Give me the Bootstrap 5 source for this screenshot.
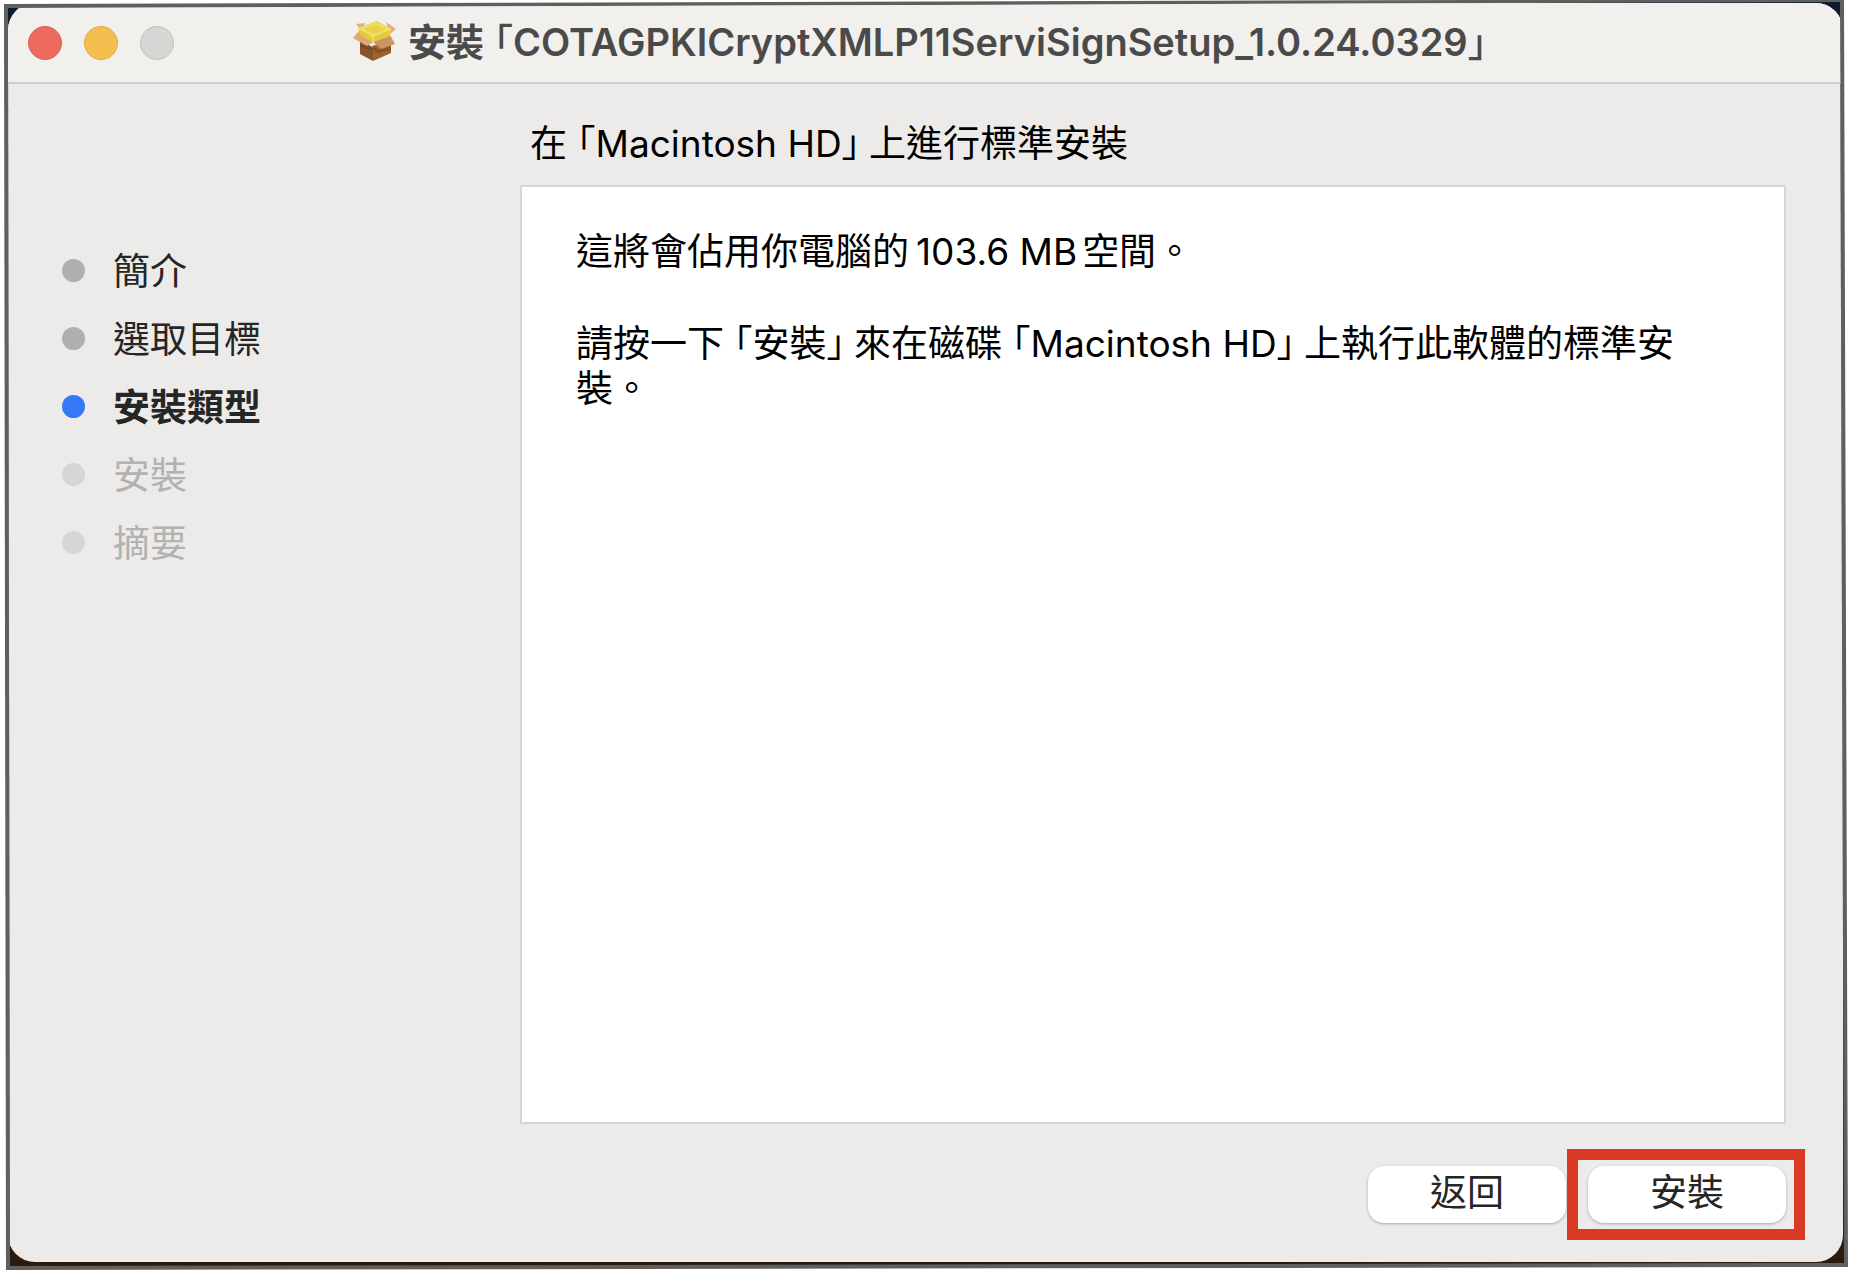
<!DOCTYPE html>
<html lang="zh-Hant">
<head>
<meta charset="utf-8">
<meta name="viewport" content="width=device-width, initial-scale=1">
<title>安裝「COTAGPKICryptXMLP11ServiSignSetup_1.0.24.0329」</title>
<link href="https://cdn.jsdelivr.net/npm/bootstrap@5.3.0/dist/css/bootstrap.min.css" rel="stylesheet">
<style>
  body { font-family: Inter, "Noto Sans CJK TC", sans-serif; font-size: 37px; line-height: 45px; color: #000; background: #fff; }
  /* slightly skewed grey outline round the desktop */
  .shot-outline { background: #5f5f5f; clip-path: polygon(4px 4px, calc(100% - 10px) -1px, calc(100% - 6px) calc(100% - 13px), 6px calc(100% - 10px)); }
  .desktop { padding: 3px 11px 18px 8px; background: linear-gradient(#0f1c2e 0 50%, #2c1a0c 50%); clip-path: polygon(8px 8px, calc(100% - 14px) 2px, calc(100% - 10px) calc(100% - 17px), 10px calc(100% - 14px)); }
  .installer { background: #ecebe9; border-radius: 27px; overflow: hidden; }
  .titlebar { height: 81px; padding: 0 16px 0 20px; background: #f1f0ed; border-bottom: 2px solid #cdccca; }
  .lights { gap: 22px; }
  .light { width: 34px; height: 34px; border-radius: 50%; border: 1px solid #c0c0be; background: #d7d6d4; padding: 0; }
  .light-close { background: #ec6a5e; border-color: #db6359; }
  .light-min { background: #f5bf4f; border-color: #dfab45; }
  .win-title { font-size: 38px; line-height: 45px; font-weight: 600; color: #4a4a4a; margin-left: 178px; padding-bottom: 4px; }
  .pkg { width: 45px; height: 42px; margin-right: 11px; }
  .quo, .quc { font-family: "Noto Sans CJK TC", sans-serif; font-feature-settings: "halt"; font-weight: 400; }
  .quo { margin-left: 10px; }
  .quc { margin-right: 9px; }
  .win-title .quc { margin-right: 0; }
  .win-title .quo, .win-title .quc { font-weight: 500; }
  .cjk-gap { margin: 0 5px 0 7px; }
  .steps { width: 512px; padding: 152px 0 0 54px; color: #262626; }
  .step { height: 68px; gap: 28px; }
  .step span { padding-top: 2px; }
  .step::before { content: ""; width: 23px; height: 23px; border-radius: 50%; background: #b0b0ae; }
  .step-current { font-weight: 700; }
  .step-current::before { background: #3478f6; }
  .step-next { color: #b2b2b0; }
  .step-next::before { background: #d6d6d4; }
  .pane { padding: 35px 57px 39px 0; }
  .pane-title { font-size: 37px; line-height: 45px; font-weight: 400; margin: 0 0 21px 10px; }
  .pane-box { background: #fff; border: 2px solid #d6d6d4; margin-top: -2px; padding: 42px 70px 42px 54px; }
  .pane-box p { margin-bottom: 45px; }
  .actions { gap: 22px; margin-top: 42px; }
  .btn-mac { width: 198px; height: 57px; padding: 0 0 4px; border: 0; border-radius: 16px; font-size: 37px; line-height: 53px; color: #262626; background: #fff; box-shadow: 0 1px 3px rgba(0,0,0,.28); }
  .btn-mac:hover { background: #f5f5f5; }
  .marker { inset: -17px -19px -17px -21px; border: 11px solid #d93a26; pointer-events: none; }
</style>
<script src="https://cdn.jsdelivr.net/npm/bootstrap@5.3.0/dist/js/bootstrap.bundle.min.js"></script>
</head>
<body>
<div class="shot-outline min-vh-100 d-flex">
  <div class="desktop flex-grow-1 d-flex">
    <main class="installer flex-grow-1 d-flex flex-column">
      <header class="titlebar d-flex align-items-center">
        <div class="lights d-flex">
          <button class="light light-close" type="button" aria-label="關閉"></button>
          <button class="light light-min" type="button" aria-label="縮到最小"></button>
          <button class="light" type="button" aria-label="縮放" disabled></button>
        </div>
        <h1 class="win-title d-flex align-items-center mb-0 text-nowrap">
          <svg class="pkg" viewBox="0 0 45 42" aria-hidden="true">
            <path d="M8 18 21 28V41L8 34Z" fill="#8a5529"/>
            <path d="M21 26 39 18V33L21 41Z" fill="#9b6232"/>
            <path d="M8 24 18 27 21 25 26 30 39 27V30L26 33 21 29 18 30 8 27Z" fill="#633813" opacity=".4"/>
            <path d="M4 4 13 3 10 11ZM34 2 44 9 38 14Z" fill="#e0ae80"/>
            <path d="M7 11 1 18 15 26 23 21Z" fill="#dba67b"/>
            <path d="M38 15 43 24 29 29 21 22Z" fill="#cc9463"/>
            <path d="M6 8 25 1 39 9 38 16 21 22 8 15Z" fill="#e3cb39"/>
            <path d="M6 8 25 1 39 9 21 16Z" fill="#f2dc5c"/>
            <path d="M12 9 24 5 33 10 21 14Z" fill="#e0c742" opacity=".5"/>
            <path d="M6 8 21 16 39 9M21 16V22" fill="none" stroke="#f8ec90" stroke-width=".8"/>
          </svg>
          <span>安裝<span class="quo">「</span>COTAGPKICryptXMLP11ServiSignSetup_1.0.24.0329<span class="quc">」</span></span>
        </h1>
      </header>
      <div class="d-flex flex-grow-1">
        <nav class="flex-shrink-0" aria-label="安裝步驟">
          <ol class="steps list-unstyled mb-0">
            <li class="step d-flex align-items-center"><span>簡介</span></li>
            <li class="step d-flex align-items-center"><span>選取目標</span></li>
            <li class="step step-current d-flex align-items-center" aria-current="step"><span>安裝類型</span></li>
            <li class="step step-next d-flex align-items-center"><span>安裝</span></li>
            <li class="step step-next d-flex align-items-center"><span>摘要</span></li>
          </ol>
        </nav>
        <section class="pane flex-grow-1 d-flex flex-column">
          <h2 class="pane-title">在<span class="quo">「</span>Macintosh HD<span class="quc">」</span>上進行標準安裝</h2>
          <div class="pane-box flex-grow-1">
            <p>這將會佔用你電腦的<span class="cjk-gap">103.6 MB</span>空間。</p>
            <p>請按一下<span class="quo">「</span>安裝<span class="quc">」</span>來在磁碟<span class="quo">「</span>Macintosh HD<span class="quc">」</span>上執行此軟體的標準安裝。</p>
          </div>
          <div class="actions d-flex justify-content-end">
            <button class="btn btn-mac" type="button">返回</button>
            <div class="position-relative">
              <button class="btn btn-mac" type="button">安裝</button>
              <div class="marker position-absolute"></div>
            </div>
          </div>
        </section>
      </div>
    </main>
  </div>
</div>
</body>
</html>
